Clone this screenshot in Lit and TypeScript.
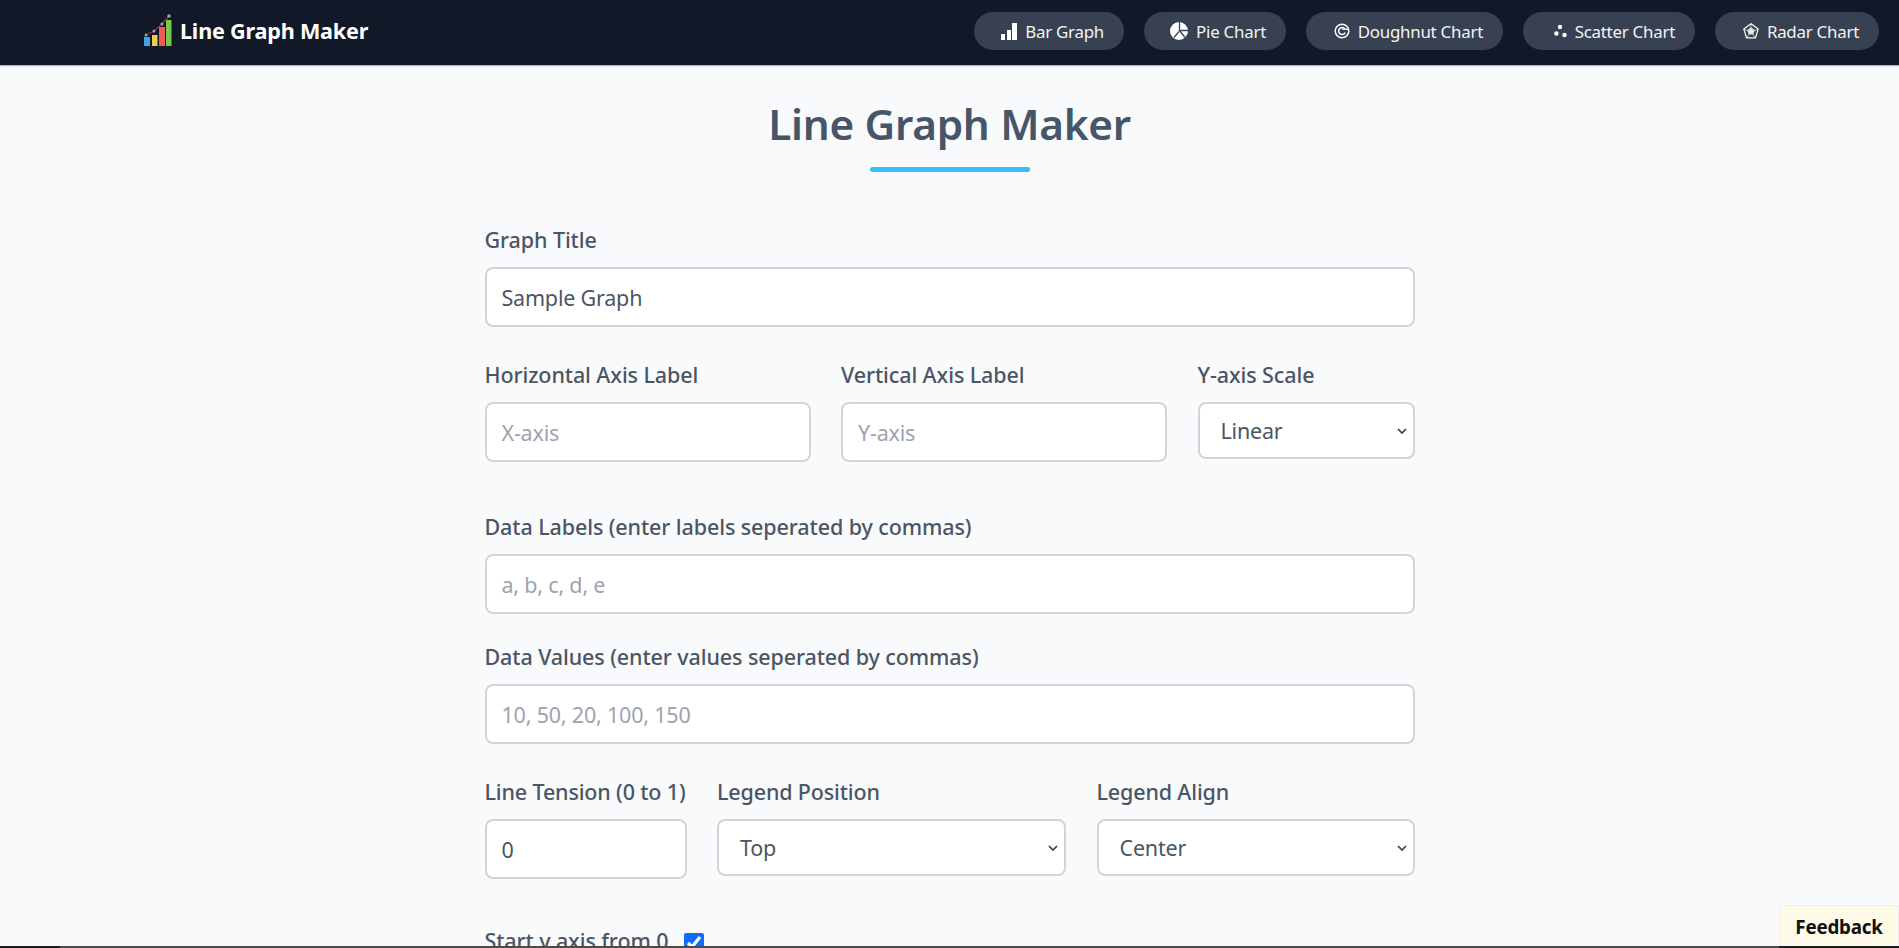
import { LitElement, html, css, svg } from "lit";
import { customElement } from "lit/decorators.js";

const navItems: { label: string; icon: unknown; w: number }[] = [
  { label: "Bar Graph", w: 150, icon: svg`<svg width="16" height="17" viewBox="0 0 16 17"><path fill="#fff" d="M0 11h4v6H0zM6 7h4v10H6zM11 0h5v17h-5z"/></svg>` },
  { label: "Pie Chart", w: 142, icon: svg`<svg width="18" height="18" viewBox="0 0 18 18"><circle cx="9" cy="9" r="9" fill="#fff"/><path d="M9.500 0v8.500H18M9.500 8.500l5.500 7M9 9.500l-5 6" stroke="#3a4454" stroke-width="1.300" fill="none"/></svg>` },
  { label: "Doughnut Chart", w: 197, icon: svg`<svg width="16" height="16" viewBox="0 0 16 16"><circle cx="8" cy="8" r="6.800" fill="none" stroke="#fff" stroke-width="1.500"/><path d="M11.200 6.300A3.500 3.500 0 1 0 11.200 9.700" fill="none" stroke="#fff" stroke-width="1.500"/><path d="M8 6.200h6" stroke="#fff" stroke-width="1.300"/></svg>` },
  { label: "Scatter Chart", w: 172, icon: svg`<svg width="13" height="14" viewBox="0 0 13 14"><circle cx="6" cy="3" r="2.200" fill="#fff"/><circle cx="2.400" cy="9.500" r="2.200" fill="#fff"/><circle cx="10.500" cy="11" r="2.200" fill="#fff"/></svg>` },
  { label: "Radar Chart", w: 164, icon: svg`<svg width="16" height="16" viewBox="0 0 16 16"><path d="M8 .8l7.200 5.300-2.700 8.700h-9L.8 6.100z" fill="none" stroke="#fff" stroke-width="1.200"/><path d="M8 4.300l3.800 2.700-1.400 4.500H5.600L4.200 7z" fill="#fff" fill-opacity=".8"/><path d="M8 .8V9M.8 6.100L8 9l7.200-2.900M3.500 14.800L8 9l4.500 5.800" stroke="#fff" stroke-width=".6" fill="none"/></svg>` },
];

@customElement("app-root")
export class AppRoot extends LitElement {
  static styles = css`
    :host {
      display: block; height: 948px; overflow: hidden; position: relative;
      background: #f8fafc; color: #4b5563;
      font-family: "Noto Sans", "Open Sans", sans-serif;
    }
    * { box-sizing: border-box; }
    nav {
      height: 65px; background: #111827; display: flex; align-items: center;
      justify-content: space-between; padding: 0 20px 3px 143px;
      box-shadow: 0 1px 1px #a9b6c4;
    }
    .brand { display: flex; align-items: center; gap: 8px; color: #fff; font-weight: 700; font-size: 21.6px; letter-spacing: -0.2px; margin-top: -2px; }
    .pills { display: flex; gap: 20px; }
    .pill {
      height: 38px; border-radius: 19px; background: #374151; color: #f3f4f6;
      display: flex; align-items: center; justify-content: flex-end; padding-right: 20px; gap: 8px;
      font-size: 16.9px; letter-spacing: -0.25px; white-space: nowrap;
    }
    main { width: 930px; margin: 0 auto; }
    h1 {
      margin: 0; padding-top: 29px; text-align: center; color: #475569;
      font-size: 42.3px; line-height: 60px; font-weight: 600; letter-spacing: -0.3px;
    }
    .rule { width: 160px; height: 5px; border-radius: 3px; background: #38bdf8; margin: 13px auto 0; }
    label { display: block; font-size: 21.5px; font-weight: 500; line-height: 30px; margin-bottom: 12px; letter-spacing: -0.1px; white-space: nowrap; }
    .field { min-width: 0; }
    input, select {
      display: block; width: 100%; height: 60px; background: #fff; color: #4b5563;
      border: 2.500px solid #d1d5db; border-radius: 8px; outline: none;
      font: 400 21.5px "Noto Sans", "Open Sans", sans-serif; letter-spacing: -0.2px;
      padding: 0 15px;
    }
    input::placeholder { color: #9ca3af; opacity: 1; }
    select {
      height: 57px; padding: 0 24px 0 21px; appearance: none;
      background-image: url("data:image/svg+xml,%3Csvg xmlns='http://www.w3.org/2000/svg' width='10' height='6' viewBox='0 0 10 6'%3E%3Cpath d='M1 1l4 4 4-4' fill='none' stroke='%23374151' stroke-width='1.700'/%3E%3C/svg%3E");
      background-repeat: no-repeat;
      background-position: right 6px center;
    }
    .f1 { margin-top: 53px; }
    .row { display: grid; column-gap: 30.5px; }
    .r1 { grid-template-columns: 326px 326px 1fr; margin-top: 33px; }
    .f2 { margin-top: 50px; }
    .f3 { margin-top: 28px; }
    .r2 { grid-template-columns: 202px 349px 1fr; margin-top: 33px; }
    .r2 label { letter-spacing: -0.15px; }
    .check { display: flex; align-items: center; gap: 16px; margin-top: 47px; }
    .check span { font-size: 21.5px; font-weight: 500; line-height: 30px; letter-spacing: -0.1px; white-space: nowrap; }
    .check input { width: 20px; height: 20px; margin: 4px 0 0; padding: 0; accent-color: #0d6efd; flex: none; }
    .strip { position: absolute; left: 0; right: 0; bottom: 0; height: 2px; background: #4b4b4b; }
    .strip::before { content: ""; position: absolute; left: 0; top: 0; bottom: 0; width: 60px; background: #1c1c1c; }
    .strip::after { content: ""; position: absolute; right: 0; top: 0; bottom: 0; width: 120px; background: #1c1c1c; }
    .feedback {
      position: absolute; right: 0; bottom: 2px; width: 120px; height: 41px;
      background: #fefae8; border: 1px solid #eeeeee; border-bottom: none; border-radius: 4px 0 0 0;
      color: #111; font-weight: 700; font-size: 18.8px; letter-spacing: -0.2px;
      display: flex; align-items: center; justify-content: center; padding-top: 2px;
    }
  `;

  render() {
    return html`
      <nav>
        <div class="brand">
          <svg width="29" height="33" viewBox="0 0 29 33">
            <path d="M3 21L11 17L19 10L26 2" stroke="#8b3a3a" stroke-width="1.200" fill="none"/>
            <rect x="1" y="23" width="6" height="9" fill="#3ea6e8"/>
            <rect x="9" y="21" width="5.500" height="11" fill="#f4c84e"/>
            <rect x="16" y="13" width="6" height="19" fill="#ee5a56"/>
            <rect x="23" y="6" width="5.500" height="26" fill="#74c94a"/>
            <circle cx="3" cy="21" r="1.500" fill="#9ca3af"/>
            <circle cx="11" cy="17" r="1.500" fill="#9ca3af"/>
            <circle cx="19" cy="10" r="1.500" fill="#9ca3af"/>
            <circle cx="26" cy="2" r="1.800" fill="#9ca3af"/>
          </svg>
          <span>Line Graph Maker</span>
        </div>
        <div class="pills">
          ${navItems.map(
            (n) => html`<a class="pill" style="width:${n.w}px">${n.icon}<span>${n.label}</span></a>`
          )}
        </div>
      </nav>
      <main>
        <h1>Line Graph Maker</h1>
        <div class="rule"></div>
        <div class="field f1">
          <label>Graph Title</label>
          <input type="text" .value=${"Sample Graph"} />
        </div>
        <div class="row r1">
          <div class="field"><label>Horizontal Axis Label</label><input type="text" placeholder="X-axis" /></div>
          <div class="field"><label>Vertical Axis Label</label><input type="text" placeholder="Y-axis" /></div>
          <div class="field"><label>Y-axis Scale</label><select><option>Linear</option></select></div>
        </div>
        <div class="field f2">
          <label>Data Labels (enter labels seperated by commas)</label>
          <input type="text" placeholder="a, b, c, d, e" />
        </div>
        <div class="field f3">
          <label>Data Values (enter values seperated by commas)</label>
          <input type="text" placeholder="10, 50, 20, 100, 150" />
        </div>
        <div class="row r2">
          <div class="field"><label>Line Tension (0 to 1)</label><input type="number" .value=${"0"} /></div>
          <div class="field"><label>Legend Position</label><select><option>Top</option></select></div>
          <div class="field"><label>Legend Align</label><select><option>Center</option></select></div>
        </div>
        <div class="check"><span>Start y axis from 0</span><input type="checkbox" checked /></div>
      </main>
      <div class="strip"></div>
      <div class="feedback">Feedback</div>
    `;
  }
}
